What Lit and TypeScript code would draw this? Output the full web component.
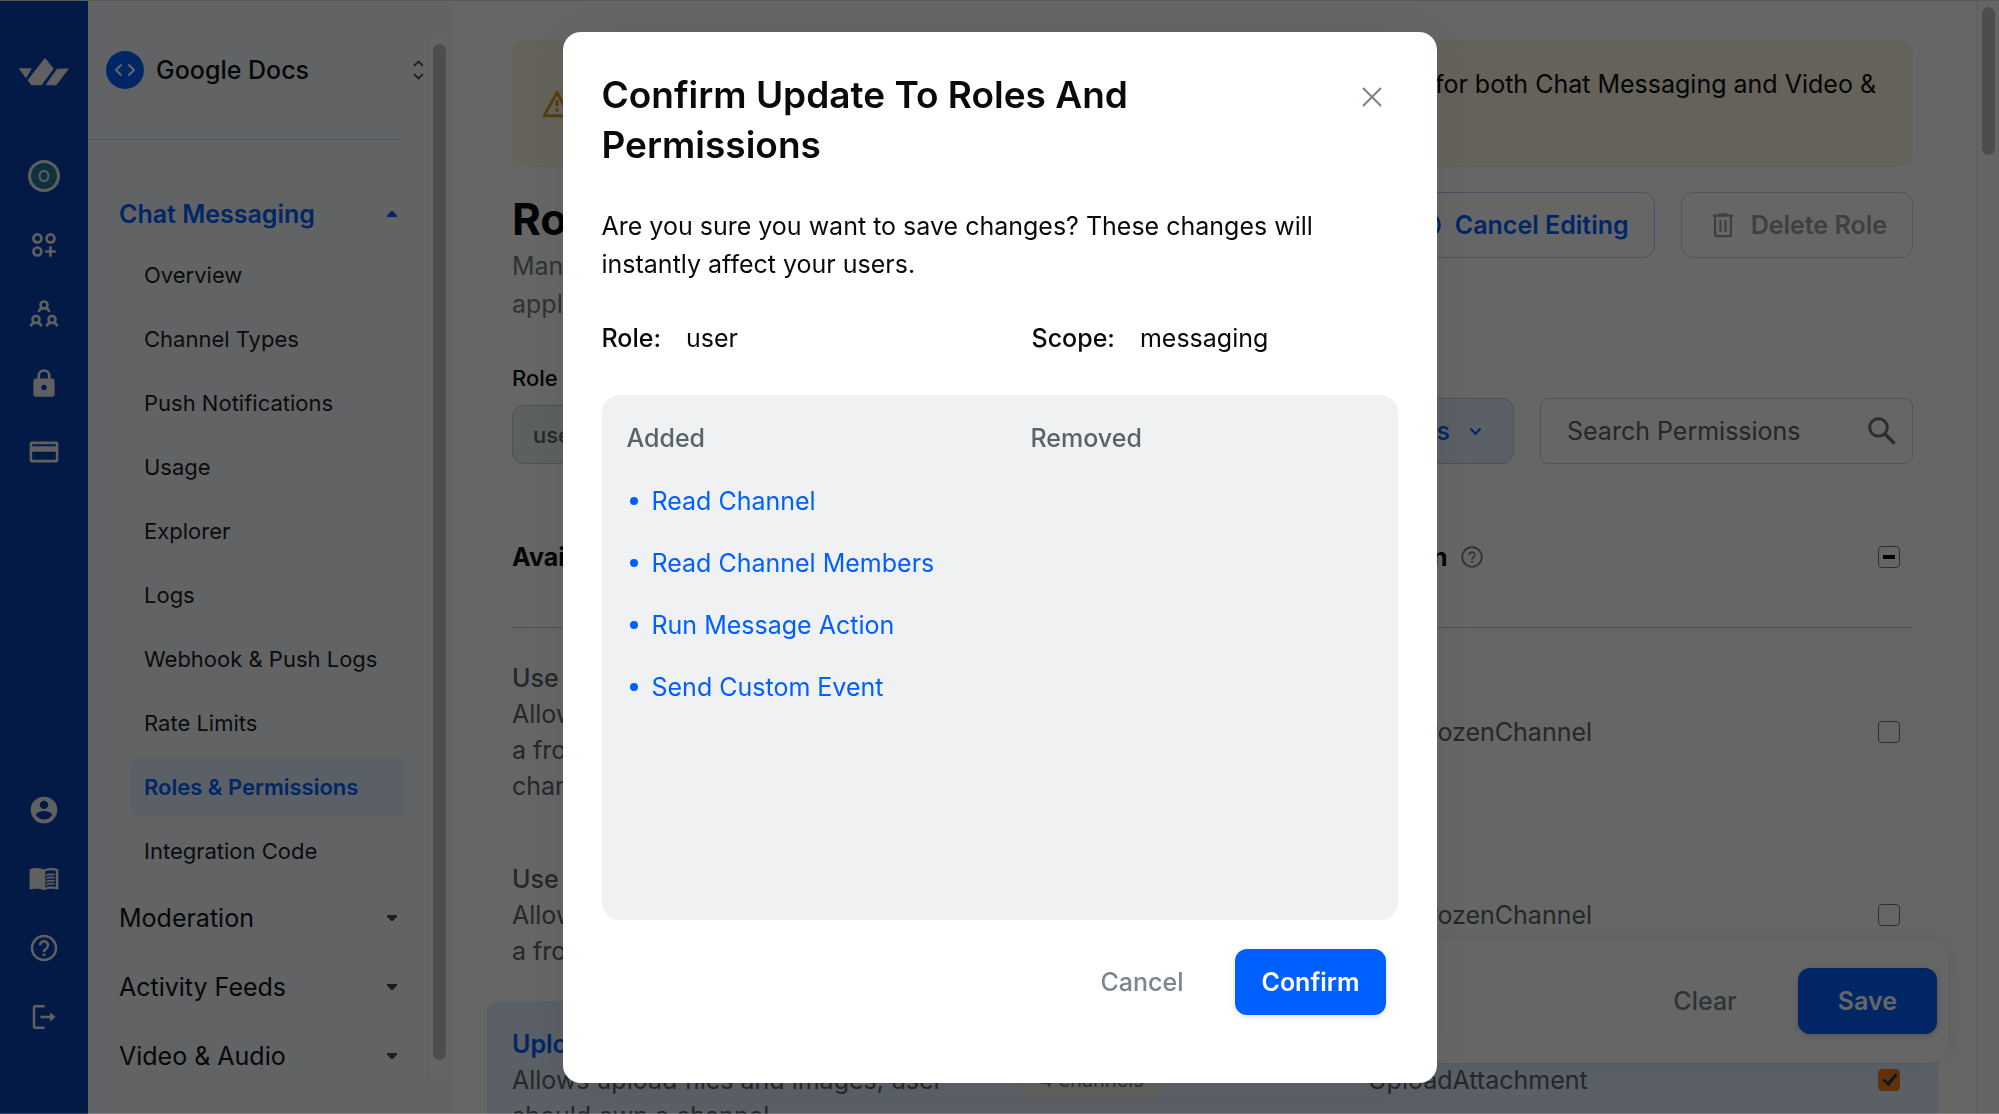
import { LitElement, html, css, svg, nothing, TemplateResult } from "lit";
import { customElement, property } from "lit/decorators.js";
import { classMap } from "lit/directives/class-map.js";

const FONT = css`Inter, "Liberation Sans", sans-serif`;

const icons: Record<string, TemplateResult> = {
  org: html`<span class="avatar">O</span>`,
  apps: html`<svg width="24" height="24" viewBox="0 0 24 24" fill="none" stroke="currentColor" stroke-width="2.6">
    <circle cx="5.4" cy="5.4" r="4" /><circle cx="18.5" cy="5.4" r="4" /><circle cx="5.4" cy="18.5" r="4" />
    <path d="M18.5 13.2v10.6M13.2 18.5h10.6" />
  </svg>`,
  team: html`<svg width="30" height="28" viewBox="0 0 30 28" fill="none" stroke="currentColor" stroke-width="2.6">
    ${[[15, 0], [7, 14.5], [23, 14.5]].map(
      ([x, y]) => svg`<g transform="translate(${x} ${y})"><circle cy="5" r="3.5" /><path d="M-5.4 11.8c.6-2.2 2-3.2 3.6-3.8M5.4 11.8c-.6-2.2-2-3.2-3.6-3.8" /></g>`
    )}
  </svg>`,
  lock: html`<svg width="22" height="28" viewBox="0 0 22 28">
    <path fill="none" stroke="currentColor" stroke-width="2.7" d="M5.7 11V6.8a5.3 5.3 0 0 1 10.6 0V11" />
    <path fill="currentColor" fill-rule="evenodd" d="M3 9.5h16a2.6 2.6 0 0 1 2.6 2.6v13A2.6 2.6 0 0 1 19 27.7H3A2.6 2.6 0 0 1 .4 25.1v-13A2.6 2.6 0 0 1 3 9.500zm8 6.3a2.7 2.7 0 1 0 0 5.4 2.7 2.7 0 0 0 0-5.4z" />
  </svg>`,
  card: html`<svg width="30" height="22" viewBox="0 0 30 22">
    <path fill="currentColor" fill-rule="evenodd" d="M2.6.5h24.8a2 2 0 0 1 2 2v17a2 2 0 0 1-2 2H2.6a2 2 0 0 1-2-2v-17a2 2 0 0 1 2-2zM3.2 3.2v2.1h23.6V3.200zM3.2 10.800v8h23.6v-8z" />
  </svg>`,
  account: html`<svg width="28" height="28" viewBox="0 0 28 28">
    <path fill="currentColor" fill-rule="evenodd" d="M14 .7a13.3 13.3 0 1 0 0 26.600A13.300 13.300 0 0 0 14 .7zm0 4a4.200 4.200 0 1 1 0 8.400 4.200 4.200 0 0 1 0-8.400zm0 18.700c-3.300 0-6.200-1.700-8-4.200.1-2.700 5.400-4.100 8-4.100s7.900 1.400 8 4.100a9.700 9.700 0 0 1-8 4.200z" />
  </svg>`,
  book: html`<svg width="30" height="24" viewBox="0 0 30 24">
    <path fill="currentColor" fill-rule="evenodd" d="M15 2.600C12 .6 5 .3.600 2.200v20.500c4.400-1.400 11.400-1.500 14.400.6 3-2.100 10-2 14.400-.6V2.200C25 .3 18 .6 15 2.600zm11.800 17.300c-3.300-.9-7.700-.7-10.400.8V4.600c2.600-1.500 7.200-1.800 10.400-.8z" />
    <path fill="none" stroke="currentColor" stroke-width="1.7" d="M17.3 8.400c2.600-1.100 5.400-1.300 8.300-.7M17.300 11.500c2.600-1.100 5.400-1.300 8.300-.7M17.300 14.600c2.600-1.100 5.400-1.300 8.300-.7M17.300 17.700c2.600-1.100 5.400-1.300 8.300-.7" />
  </svg>`,
  help: html`<svg width="28" height="28" viewBox="0 0 28 28" fill="none" stroke="currentColor" stroke-width="2.5">
    <circle cx="14" cy="14" r="12" /><path d="M10 11.300a4 4 0 1 1 6.300 3.200c-1.500 1-2.300 1.700-2.300 3.500M14 19.500v2.600" />
  </svg>`,
  exit: html`<svg width="24" height="26" viewBox="0 0 24 26" fill="none" stroke="currentColor" stroke-width="2.5">
    <path d="M12.500 2.200H3.500a1.500 1.500 0 0 0-1.500 1.500v18.600a1.500 1.500 0 0 0 1.500 1.500h9M8.500 13H20" />
    <path fill="currentColor" stroke="none" d="M18 8.600 23.600 13 18 17.400z" />
  </svg>`,
};

@customElement("app-rail")
export class AppRail extends LitElement {
  static styles = css`
    :host { display: flex; flex-direction: column; width: 88px; flex: none; background: #0c43af; color: #f0f0f0; }
    svg { display: block; }
    ul { list-style: none; margin: 0; padding: 0; }
    .bottom { margin-top: auto; padding-bottom: 63px; }
    a { display: flex; align-items: center; justify-content: center; height: 69px; color: inherit; text-decoration: none; }
    .logo { height: 30px; padding-top: 56px; margin-bottom: 54px; }
    .avatar { box-sizing: border-box; display: flex; align-items: center; justify-content: center; width: 32px; height: 32px; border: 3px solid #ededed; border-radius: 50%; background: #1f7f99; font: 500 16px/16px ${FONT}; }
  `;
  private item(icon: string, label: string) {
    return html`<li><a href="#${icon}" aria-label=${label}>${icons[icon]}</a></li>`;
  }
  render() {
    return html`
      <a class="logo" href="#home" aria-label="Home">
        <svg width="52" height="30" viewBox="0 0 52 30" fill="currentColor">
          <path d="M1.500 11.800h11.700L8 20.500zM27 1.500l8.200 10.200-11.800 16.100H13.300l-3.100-4.800zM39.200 12.200l11-.3-12.200 15.900H28.200z" stroke="currentColor" stroke-linejoin="round" />
        </svg>
      </a>
      <ul>
        ${this.item("org", "Organization")}${this.item("apps", "Apps")}${this.item("team", "Team")}
        ${this.item("lock", "Security")}${this.item("card", "Billing")}
      </ul>
      <ul class="bottom">
        ${this.item("account", "Account")}${this.item("book", "Docs")}${this.item("help", "Help")}${this.item("exit", "Log out")}
      </ul>
    `;
  }
}

@customElement("app-sidebar")
export class AppSidebar extends LitElement {
  static styles = css`
    :host { display: flex; width: 362px; flex: none; background: #f5f7fb; color: #0f1414; font-family: ${FONT}; }
    .content { flex: 1; min-width: 0; }
    .head { box-sizing: border-box; display: flex; align-items: center; gap: 12px; width: 100%; height: 138px; padding: 0 4px 0 18px; border: 0; background: none; color: inherit; font: 500 25px/32px ${FONT}; text-align: left; }
    .head .name { flex: 1; }
    .badge { display: flex; align-items: center; justify-content: center; width: 38px; height: 38px; border-radius: 50%; background: #005fff; color: #fff; }
    hr { margin: 0 26px 45px 0; border: 0; border-top: 1px solid #c9d8e8; }
    .section { display: flex; align-items: center; justify-content: space-between; height: 69px; padding: 0 31px; font-size: 25px; line-height: 32px; color: inherit; text-decoration: none; }
    .section.open { height: 58px; color: #005fff; font-weight: 600; }
    .caret { width: 10px; height: 6px; }
    ul { list-style: none; margin: 0; padding: 0 21px 0 43px; }
    .link { display: flex; align-items: center; height: 58px; margin: 3px 0; padding: 0 13px; border-radius: 8px; color: #1c1f22; font-size: 22px; line-height: 28px; text-decoration: none; white-space: nowrap; }
    li { display: flow-root; }
    .link.active { background: #e4eeff; color: #005fff; font-weight: 600; }
    .track { width: 20px; margin: 37px 0 38px; padding: 6px 0 16px; border: solid #efefef; border-width: 0 1px; background: #fafafa; display: flex; justify-content: center; }
    .thumb { width: 13px; border-radius: 7px; background: #c1c1c1; }
  `;
  private links = ["Overview", "Channel Types", "Push Notifications", "Usage", "Explorer", "Logs", "Webhook & Push Logs", "Rate Limits", "Roles & Permissions", "Integration Code"];
  render() {
    const closed = svg`<path d="M0 0h10v1.500L6.400 5.500q-1.400 1-2.800 0L0 1.500z" fill="#454a50"/>`;
    const open = svg`<path d="M0 6h10V4.500L6.400.5q-1.400-1-2.800 0L0 4.500z" fill="#005fff"/>`;
    return html`
      <nav class="content">
        <button class="head">
          <span class="badge"><svg width="22" height="14" viewBox="0 0 22 14" fill="none" stroke="currentColor" stroke-width="2"><path d="M7.500 1.500 2 7l5.500 5.500M14.500 1.500 20 7l-5.500 5.500" /></svg></span>
          <span class="name">Google Docs</span>
          <svg width="11" height="20" viewBox="0 0 11 20" fill="none" stroke="#454a50" stroke-width="1.8"><path d="M1 5.800 5.500 1.500 10 5.800M1 14.200l4.500 4.300L10 14.200" /></svg>
        </button>
        <hr />
        <a class="section open" href="#chat">Chat Messaging<svg class="caret" viewBox="0 0 10 6">${open}</svg></a>
        <ul>
          ${this.links.map((l) => html`<li><a class=${classMap({ link: true, active: l === "Roles & Permissions" })} href="#${l.toLowerCase().replace(/\W+/g, "-")}">${l}</a></li>`)}
        </ul>
        ${["Moderation", "Activity Feeds", "Video & Audio"].map((s) => html`<a class="section" href="#${s.split(" ")[0].toLowerCase()}">${s}<svg class="caret" viewBox="0 0 10 6">${closed}</svg></a>`)}
      </nav>
      <div class="track"><div class="thumb"></div></div>
    `;
  }
}

interface Permission { title: string; lines: string[]; name: string; scope?: string; checked?: boolean }

@customElement("roles-page")
export class RolesPage extends LitElement {
  static styles = css`
    :host { position: relative; display: flex; flex: 1; min-width: 0; overflow: hidden; background: #fff; color: #080a0b; font: 400 25px/36px ${FONT}; }
    .content { flex: 1; min-width: 0; padding: 39px 63px 0 62px; }
    svg { display: block; flex: none; }
    .alert { box-sizing: border-box; display: flex; align-items: center; justify-content: space-between; height: 127px; padding: 0 37px 0 30px; border-radius: 16px; background: #fdf4e2; }
    .alert p { margin: 0; padding-bottom: 40px; line-height: 38px; }
    .top { display: flex; align-items: flex-start; justify-content: space-between; margin-top: 25px; }
    h1 { margin: 0 0 1px; font-size: 44px; line-height: 54px; font-weight: 700; }
    .intro { margin: 0; line-height: 38px; color: #727f87; }
    .group { display: flex; gap: 26px; }
    button { box-sizing: border-box; display: flex; align-items: center; height: 66px; padding: 0 25px; border: 1px solid #b9c9f2; border-radius: 12px; background: none; color: #005fff; font: 500 25px/32px ${FONT}; white-space: nowrap; }
    .edit { gap: 14px; font-weight: 600; }
    .delete { gap: 17px; padding-left: 30px; border-color: #cdd0d3; color: #9aa0a4; font-weight: 600; }
    .filters { display: flex; align-items: flex-end; justify-content: space-between; margin-top: 41px; }
    .filters label { display: block; margin-bottom: 13px; font-size: 22px; line-height: 28px; font-weight: 500; }
    .role { box-sizing: border-box; appearance: none; width: 300px; height: 59px; padding: 0 20px; border: 1px solid #c0c6c9; border-radius: 12px; background: #e9eff1; color: #5b6468; opacity: 1; font: 500 22px/28px ${FONT}; }
    .filter { gap: 19px; padding-right: 31px; background: #e3edff; }
    .search { box-sizing: border-box; display: flex; align-items: center; width: 373px; height: 66px; padding: 0 16px 0 26px; border: 1px solid #cdd0d3; border-radius: 8px; }
    .search input { flex: 1; min-width: 0; padding: 0; border: 0; outline: 0; background: none; font: 400 25px/32px ${FONT}; }
    .search input::placeholder { color: #596468; opacity: 1; }
    table { width: calc(100% + 50px); margin: 22px -25px 0; border-collapse: separate; border-spacing: 0; table-layout: fixed; text-align: left; }
    th { height: 142px; padding: 0; font-weight: 700; }
    thead tr { background: linear-gradient(#c4c7ca, #c4c7ca) 25px 100% / calc(100% - 50px) 1px no-repeat; }
    .help { display: inline-flex; align-items: center; gap: 13px; }
    td { padding: 25px 0 32px; color: #596468; vertical-align: middle; }
    th:first-child, td:first-child { padding-left: 25px; }
    .c-desc { width: 525px; } .c-scope { width: 356px; } .c-tick { width: 60px; }
    .spacer td { height: 7px; padding: 0; }
    .name { display: block; font-weight: 500; }
    .on td { background: #e3edff; }
    .on td:first-child { border-radius: 10px 0 0; }
    .on td:last-child { border-radius: 0 10px 0 0; }
    .on .name { color: #005fff; font-weight: 600; }
    .pill { display: inline-block; margin-left: 6px; padding: 6px 22px; border-radius: 24px; background: #eef0e9; font-size: 20px; line-height: 28px; color: #727f87; }
    .tick { box-sizing: border-box; appearance: none; display: block; width: 22px; height: 22px; margin: 0; border: 1px solid #70757a; border-radius: 4px; position: relative; }
    .tick:indeterminate::before { content: ""; position: absolute; left: 4px; top: 8px; width: 12px; height: 4px; background: #000; }
    .tick:checked { border-color: #f07d1a; background: #f07d1a; }
    .tick:checked::before { content: ""; position: absolute; left: 7px; top: 1px; width: 5px; height: 11px; border: solid #2d3a42; border-width: 0 3px 3px 0; transform: rotate(40deg); }
    .bar { position: absolute; left: 150px; right: 50px; bottom: 51px; box-sizing: border-box; display: flex; align-items: center; justify-content: flex-end; gap: 36px; height: 125px; padding: 0 12px; border-radius: 20px; background: #fff; box-shadow: 0 2px 24px rgba(0, 0, 0, 0.06), 0 0 2px rgba(0, 0, 0, 0.1); }
    .clear { border: 0; color: #727f87; }
    .save { padding: 0 40px; border: 0; background: #005fff; color: #fff; font-weight: 600; box-shadow: 0 2px 6px rgba(0, 0, 0, 0.2); }
    .track { display: flex; justify-content: center; align-items: flex-start; width: 21px; padding-top: 6px; border-left: 2px solid #f1f1f1; background: #fcfcfc; }
    .thumb { width: 13px; height: 148px; border-radius: 7px; background: #c1c1c1; }
  `;
  private rows: Permission[] = [
    { title: "Use Frozen Channel", lines: ["Allows sending messages to", "a frozen channel in any", "channel"], name: "UseFrozenChannel" },
    { title: "Use Frozen Channel", lines: ["Allows sending messages to", "a frozen channel"], name: "UseFrozenChannel" },
    { title: "Upload Attachment", lines: ["Allows upload files and images, user", "should own a channel"], name: "UploadAttachment", scope: "4 channels", checked: true },
  ];
  render() {
    return html`
      <main class="content">
        <div class="alert" role="status">
          <svg width="30" height="28" viewBox="0 0 30 28" fill="none" stroke="#d99a1c" stroke-width="3" stroke-linejoin="round"><path d="M15 2.500 27.800 25.800H2.200zM15 10v6M15 18.600v3.200" /></svg>
          <p>Changes apply for both Chat Messaging and Video &amp;</p>
        </div>
        <header class="top">
          <div>
            <h1>Roles &amp; Permissions</h1>
            <p class="intro">Manage roles for your<br />application</p>
          </div>
          <div class="group">
            <button class="edit"><svg width="26" height="26" viewBox="0 0 26 26" fill="none" stroke="currentColor" stroke-width="2.5"><circle cx="13" cy="13" r="11.500" /><path d="m9 9 8 8M17 9l-8 8" /></svg>Cancel Editing</button>
            <button class="delete"><svg width="22" height="26" viewBox="0 0 22 28" fill="none" stroke="currentColor" stroke-width="2.4"><path d="M0 4h22M6.500 2.600h9M2.500 4v20.500a1.500 1.500 0 0 0 1.500 1.500h14a1.500 1.500 0 0 0 1.500-1.500V4M8.300 8.500v13M13.700 8.500v13" /></svg>Delete Role</button>
          </div>
        </header>
        <div class="filters">
          <div>
            <label for="role">Role</label>
            <select class="role" id="role" disabled><option>user</option></select>
          </div>
          <div class="group">
            <button class="filter" aria-haspopup="listbox">All Permissions<svg width="13" height="9" viewBox="0 0 13 9" fill="none" stroke="currentColor" stroke-width="2"><path d="m1.500 1.500 5 5.500 5-5.500" /></svg></button>
            <div class="search">
              <input type="search" placeholder="Search Permissions" aria-label="Search Permissions" />
              <svg width="28" height="28" viewBox="0 0 28 28" fill="none" stroke="#6c767c" stroke-width="3"><circle cx="10.500" cy="10.500" r="8.800" /><path d="m17 17 9.500 9.500" stroke-width="3.6" /></svg>
            </div>
          </div>
        </div>
        <table>
          <colgroup><col class="c-desc" /><col class="c-scope" /><col /><col class="c-tick" /></colgroup>
          <thead>
            <tr>
              <th>Available</th><th></th>
              <th><span class="help">Action<svg width="22" height="22" viewBox="0 0 22 22" fill="none" stroke="#727f87" stroke-width="1.7"><circle cx="11" cy="11" r="9.800" /><path d="M8.200 9a2.800 2.800 0 1 1 4.300 2.300c-1 .7-1.500 1.100-1.500 2.300M11 14.800v2" /></svg></span></th>
              <th><input class="tick" type="checkbox" aria-label="Select all" .indeterminate=${true} /></th>
            </tr>
          </thead>
          <tbody>
            <tr class="spacer"><td colspan="4"></td></tr>
            ${this.rows.map((r) => html`<tr class=${classMap({ on: !!r.checked })}>
              <td><span class="name">${r.title}</span>${r.lines.map((l, i) => html`${i ? html`<br />` : nothing}${l}`)}</td>
              <td>${r.scope ? html`<span class="pill">${r.scope}</span>` : nothing}</td>
              <td>${r.name}</td>
              <td><input class="tick" type="checkbox" aria-label=${r.title} .checked=${!!r.checked} /></td>
            </tr>`)}
          </tbody>
        </table>
      </main>
      <div class="track"><div class="thumb"></div></div>
      <div class="bar"><button class="clear">Clear</button><button class="save">Save</button></div>
    `;
  }
}

@customElement("confirm-dialog")
export class ConfirmDialog extends LitElement {
  @property({ type: Array }) added: string[] = [];
  static styles = css`
    :host { position: fixed; inset: 0; display: flex; align-items: center; justify-content: center; background: rgba(0, 0, 0, 0.6); box-shadow: inset 0 -1px rgba(255, 255, 255, 0.2); font: 400 25px/38px ${FONT}; color: #080a0b; }
    .dialog { box-sizing: border-box; width: 874px; padding: 38px 39px 68px; border-radius: 18px; background: #fff; box-shadow: 0 0 60px rgba(0, 0, 0, 0.08); }
    header { display: flex; align-items: flex-start; justify-content: space-between; }
    h2 { margin: 0; max-width: 600px; font-size: 37px; line-height: 50px; font-weight: 600; }
    button { border: 0; background: none; font: 500 25px/32px ${FONT}; }
    .close { display: flex; padding: 17px 16px; color: #7a8388; }
    p { margin: 37px 0 36px; }
    dl { display: grid; grid-template-columns: 430px 1fr; margin: 0; }
    dl div { display: flex; gap: 25px; }
    dt { font-weight: 500; }
    dd { margin: 0; }
    .box { box-sizing: border-box; display: grid; grid-template-columns: 404px 1fr; min-height: 525px; margin-top: 38px; padding: 24px 25px; border-radius: 18px; background: #f0f1f3; }
    h3 { margin: 0; font-size: 25px; line-height: 38px; font-weight: 500; color: #596468; }
    ul { list-style: none; margin: 25px 0 0; padding: 0; display: grid; gap: 24px; color: #005fff; }
    li { display: flex; align-items: center; gap: 14px; padding-left: 3px; }
    li::before { content: ""; width: 8px; height: 8px; border-radius: 50%; background: currentColor; }
    footer { display: flex; justify-content: flex-end; align-items: center; gap: 46px; margin: 29px 12px 0; }
    .cancel { color: #7a858c; }
    .confirm { height: 66px; padding: 0 26px; border-radius: 12px; background: #005fff; color: #fff; font-weight: 600; box-shadow: 0 2px 6px rgba(0, 0, 0, 0.12); }
  `;
  render() {
    return html`
      <section class="dialog" role="dialog" aria-modal="true" aria-labelledby="title">
        <header>
          <h2 id="title">Confirm Update To Roles And Permissions</h2>
          <button class="close" aria-label="Close"><svg width="20" height="20" viewBox="0 0 20 20" fill="none" stroke="currentColor" stroke-width="2" stroke-linecap="round"><path d="m1.500 1.500 17 17M18.500 1.500l-17 17" /></svg></button>
        </header>
        <p>Are you sure you want to save changes? These changes will instantly affect your users.</p>
        <dl>
          <div><dt>Role:</dt><dd>user</dd></div>
          <div><dt>Scope:</dt><dd>messaging</dd></div>
        </dl>
        <div class="box">
          <div><h3>Added</h3><ul>${this.added.map((a) => html`<li>${a}</li>`)}</ul></div>
          <div><h3>Removed</h3></div>
        </div>
        <footer><button class="cancel">Cancel</button><button class="confirm">Confirm</button></footer>
      </section>
    `;
  }
}

@customElement("app-root")
export class AppRoot extends LitElement {
  static styles = css`
    :host { display: block; }
    .app { box-sizing: border-box; display: flex; height: 100vh; overflow: hidden; border-top: 1px solid #dedede; }
  `;
  render() {
    return html`
      <div class="app"><app-rail></app-rail><app-sidebar></app-sidebar><roles-page></roles-page></div>
      <confirm-dialog .added=${["Read Channel", "Read Channel Members", "Run Message Action", "Send Custom Event"]}></confirm-dialog>
    `;
  }
}
